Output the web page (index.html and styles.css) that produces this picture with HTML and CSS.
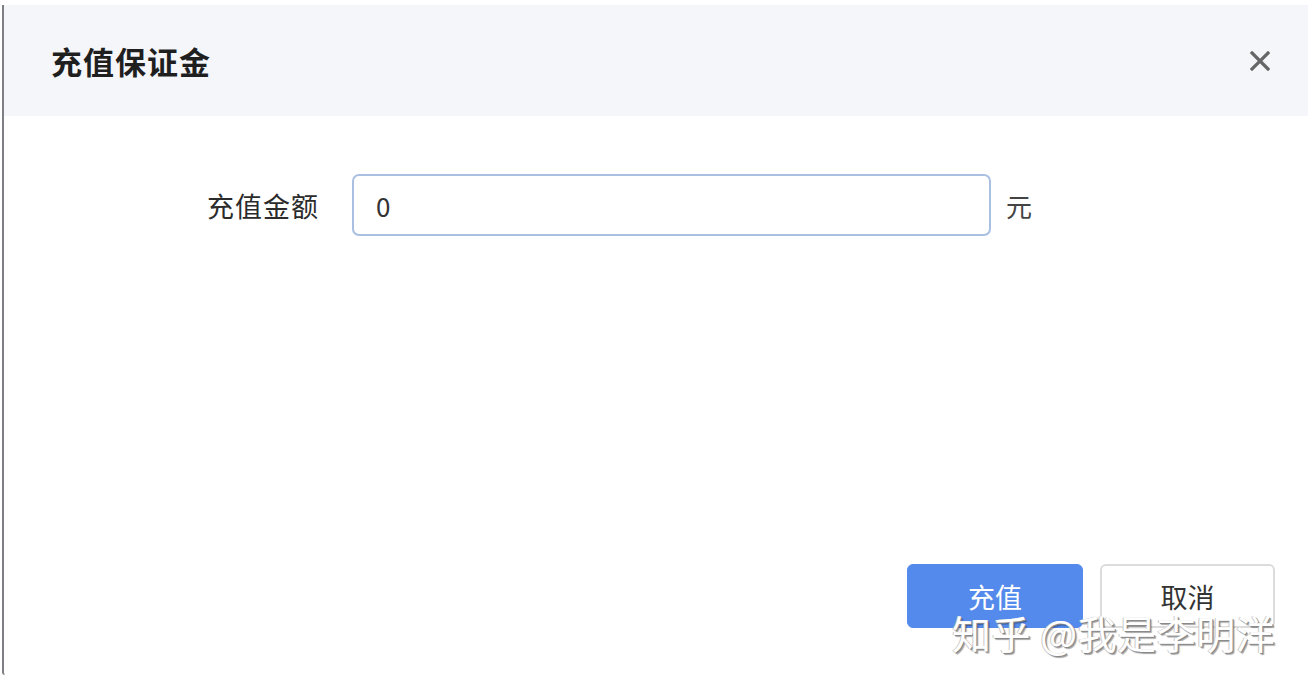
FILE: index.html
```html
<!DOCTYPE html>
<html lang="zh">
<head>
<meta charset="utf-8">
<title>充值保证金</title>
<link rel="stylesheet" href="styles.css">
</head>
<body>
<div class="dialog">
  <div class="dialog-header">
    <h2 class="dialog-title">充值保证金</h2>
    <button class="dialog-close" aria-label="关闭">
      <svg width="20" height="20" viewBox="0 0 20 20"><path d="M2 2L18 18M18 2L2 18" stroke="#666" stroke-width="3.2" stroke-linecap="square" fill="none"/></svg>
    </button>
  </div>
  <div class="dialog-body">
    <div class="form-row">
      <label class="form-label">充值金额</label>
      <div class="form-input">0</div>
      <span class="form-unit">元</span>
    </div>
  </div>
  <div class="dialog-footer">
    <button class="btn btn-primary">充值</button>
    <button class="btn btn-default">取消</button>
  </div>
</div>
<div class="watermark">知乎 @我是李明洋</div>
</body>
</html>
```
FILE: styles.css
```css
html, body {
  margin: 0;
  padding: 0;
  background: #ffffff;
  font-family: "Noto Sans CJK SC", "Noto Sans", sans-serif;
}
body {
  width: 1308px;
  height: 693px;
  overflow: hidden;
  position: relative;
}
.dialog {
  margin: 5px 0 0 2px;
  height: 670px;
  border-left: 2px solid #7d7f84;
  border-bottom-left-radius: 3px;
  background: #fff;
  display: flex;
  flex-direction: column;
  box-sizing: border-box;
}
.dialog-header {
  height: 111px;
  background: #f5f6f9;
  display: flex;
  align-items: center;
  justify-content: space-between;
  padding: 0 38px 0 47px;
  box-sizing: border-box;
}
.dialog-title {
  margin: 0;
  font-size: 31px;
  font-weight: 700;
  color: #1f1f1f;
  letter-spacing: 1px;
}
.dialog-close {
  border: none;
  background: none;
  padding: 0;
  width: 20px;
  height: 20px;
  display: flex;
  cursor: pointer;
}
.dialog-body {
  padding-top: 58px;
}
.form-row {
  display: flex;
  align-items: center;
}
.form-label {
  width: 348px;
  text-align: right;
  font-size: 27px;
  color: #2b2b2b;
  padding-right: 33px;
  box-sizing: border-box;
  letter-spacing: 1px;
}
.form-input {
  width: 639px;
  height: 62px;
  box-sizing: border-box;
  border: 2px solid #a9c0e3;
  border-radius: 7px;
  padding-left: 22px;
  display: flex;
  align-items: center;
  font-size: 26px;
  color: #333;
}
.form-unit {
  margin-left: 15px;
  font-size: 26px;
  color: #444;
}
.dialog-footer {
  margin-top: auto;
  display: flex;
  justify-content: flex-end;
  gap: 17px;
  padding: 0 33px 47px 0;
}
.btn {
  width: 176px;
  height: 64px;
  border-radius: 6px;
  font-family: "Noto Sans CJK SC", "Noto Sans", sans-serif;
  font-size: 27px;
  box-sizing: border-box;
  cursor: pointer;
  padding: 0;
}
.btn-primary {
  background: #548aeb;
  border: 1px solid #548aeb;
  color: #fff;
}
.btn-default {
  width: 175px;
  background: #fff;
  border: 2px solid #dcdcdc;
  color: #333;
}
.watermark {
  position: absolute;
  left: 952px;
  top: 609px;
  font-size: 39px;
  line-height: 1.2;
  color: #ffffff;
  text-shadow: 1px 1px 0 #8a8a8a, -1px 0 0 #c8c8c8, 2px 2px 1px rgba(0,0,0,0.35);
  white-space: nowrap;
  letter-spacing: 0.5px;
}
```
